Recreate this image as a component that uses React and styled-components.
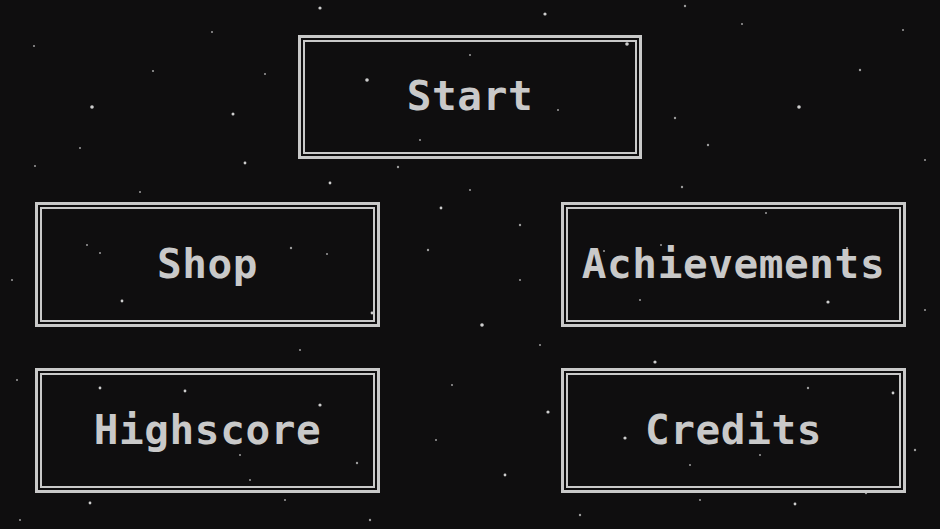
import React from "react";
import styled, { createGlobalStyle } from "styled-components";

const Global = createGlobalStyle`
  html, body {
    margin: 0;
    padding: 0;
    background: #0f0e0f;
  }
  body {
    width: 940px;
    height: 529px;
    overflow: hidden;
  }
`;

const Screen = styled.div`
  position: relative;
  width: 940px;
  height: 529px;
  background: #0f0e0f;
  overflow: hidden;
`;

const Starfield = styled.svg`
  position: absolute;
  inset: 0;
  width: 940px;
  height: 529px;
  pointer-events: none;
`;

const Menu = styled.div`
  position: relative;
  display: flex;
  flex-direction: column;
  align-items: center;
  padding-top: 35px;
`;

const Grid = styled.div`
  display: grid;
  grid-template-columns: 345px 345px;
  justify-content: space-between;
  row-gap: 41px;
  width: 871px;
  margin-top: 43px;
  margin-left: 1px;
`;

const MenuButton = styled.button`
  box-sizing: border-box;
  width: ${(p) => p.$w || 345}px;
  height: ${(p) => p.$h || 125}px;
  display: flex;
  align-items: center;
  justify-content: center;
  background: transparent;
  border: 3px solid #c9c9c9;
  box-shadow: inset 0 0 0 2px #0f0e0f, inset 0 0 0 4px #c9c9c9;
  color: #c9c9c9;
  font-family: "DejaVu Sans Mono", "Liberation Mono", monospace;
  font-size: 41px;
  font-weight: 700;
  letter-spacing: 0.6px;
  padding: 0 0 2px 0;
  margin: 0;
  cursor: pointer;
`;

const stars = [
  [320, 8, 1.6], [545, 14, 1.6], [685, 6, 1.2], [34, 46, 1], [153, 71, 1.1],
  [92, 107, 1.8], [233, 114, 1.5], [80, 148, 1], [245, 163, 1.4], [35, 166, 1],
  [140, 192, 1], [265, 74, 1], [367, 80, 1.8], [799, 107, 1.8], [860, 70, 1.2],
  [903, 30, 1], [627, 44, 1.8], [675, 118, 1.2], [708, 145, 1.2], [330, 183, 1.4],
  [682, 187, 1.2], [428, 250, 1.2], [482, 325, 1.8], [520, 280, 1], [548, 412, 1.6],
  [505, 475, 1.4], [625, 438, 1.6], [655, 362, 1.6], [740, 372, 1.2], [808, 388, 1.2],
  [866, 493, 1.2], [893, 393, 1.4], [795, 504, 1.4], [185, 391, 1.4], [100, 388, 1.4],
  [320, 405, 1.6], [357, 463, 1.2], [90, 503, 1.4], [285, 500, 1], [600, 155, 1.4],
  [470, 190, 1], [540, 345, 1], [580, 515, 1.2], [700, 500, 1], [452, 385, 1],
  [436, 440, 1], [122, 301, 1.4], [250, 480, 1], [370, 520, 1.2], [17, 380, 1],
  [87, 245, 1], [100, 253, 1], [291, 248, 1.2], [327, 254, 1], [372, 313, 1.4],
  [661, 245, 1], [847, 248, 1], [828, 302, 1.6], [766, 213, 1], [604, 251, 1],
  [441, 208, 1.4], [398, 167, 1.2], [212, 32, 1], [742, 24, 1], [925, 160, 1],
  [915, 450, 1.2], [20, 520, 1], [690, 465, 1], [760, 455, 1], [150, 440, 1],
  [240, 455, 1], [470, 55, 1], [558, 110, 1], [420, 140, 1], [880, 205, 1],
  [925, 310, 1], [12, 280, 1], [520, 225, 1.2], [640, 300, 1], [300, 350, 1],
];

function Stars() {
  return (
    <Starfield viewBox="0 0 940 529">
      {stars.map(([x, y, r], i) => (
        <circle key={i} cx={x} cy={y} r={r} fill="#d8d8d8" opacity={r > 1.3 ? 0.95 : 0.7} />
      ))}
    </Starfield>
  );
}

export default function App() {
  return (
    <>
      <Global />
      <Screen>
        <Stars />
        <Menu>
          <MenuButton $w={344} $h={124}>Start</MenuButton>
          <Grid>
            <MenuButton>Shop</MenuButton>
            <MenuButton>Achievements</MenuButton>
            <MenuButton>Highscore</MenuButton>
            <MenuButton>Credits</MenuButton>
          </Grid>
        </Menu>
      </Screen>
    </>
  );
}
